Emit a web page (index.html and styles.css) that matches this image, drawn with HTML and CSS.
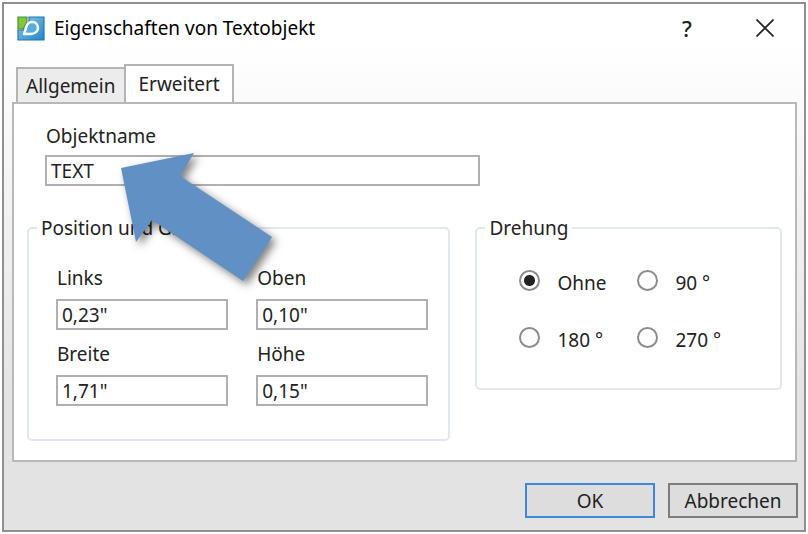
FILE: index.html
```html
<!DOCTYPE html>
<html lang="de">

<head>
    <meta charset="UTF-8">
    <title>Eigenschaften von Textobjekt</title>
    <link rel="stylesheet" href="styles.css">
</head>

<body>
    <form class="dialog">
        <header class="titlebar">
            <svg class="logo" viewBox="0 0 28 25" aria-hidden="true">
                <defs>
                    <linearGradient id="blau" x1="0" y1="0" x2="1" y2="1">
                        <stop offset="0" stop-color="#8ccdea" />
                        <stop offset="1" stop-color="#2384c6" />
                    </linearGradient>
                </defs>
                <path d="M1 14H6L12 9V1H27V24H1Z" fill="url(#blau)" stroke="#2574b5" stroke-width="1.2" />
                <path d="M1 1H10V6L6 13H1Z" fill="#83c441" stroke="#4c8f2b" stroke-width="1.2" />
                <path d="M7 18L10 9C11 7 13 6 15 6C19 6 21 9 21 12C21 16 17 18 13 18Z" fill="#55aee0" stroke="#fff" stroke-width="2.4" stroke-linejoin="round" />
            </svg>
            <h1>Eigenschaften von Textobjekt</h1>
            <button type="button" class="icon-button help" aria-label="Hilfe">?</button>
            <button type="button" class="icon-button" aria-label="Schließen">
                <svg class="close" viewBox="0 0 18 18" aria-hidden="true">
                    <path d="M0.5 0.5L17.5 17.5M17.5 0.5L0.5 17.5" stroke="#222" stroke-width="1.7" fill="none" />
                </svg>
            </button>
        </header>

        <nav class="tabs" role="tablist">
            <button type="button" class="tab" role="tab">Allgemein</button>
            <button type="button" class="tab valgt" role="tab" aria-selected="true">Erweitert</button>
        </nav>

        <section class="panel">
            <div class="field object-name">
                <label for="objektname">Objektname</label>
                <input type="text" id="objektname" value="TEXT">
            </div>

            <div class="groups">
                <fieldset>
                    <legend>Position und Größe</legend>
                    <div class="sizes">
                        <div class="field">
                            <label for="links">Links</label>
                            <input type="text" id="links" value="0,23&quot;">
                        </div>
                        <div class="field">
                            <label for="oben">Oben</label>
                            <input type="text" id="oben" value="0,10&quot;">
                        </div>
                        <div class="field">
                            <label for="breite">Breite</label>
                            <input type="text" id="breite" value="1,71&quot;">
                        </div>
                        <div class="field">
                            <label for="hoehe">Höhe</label>
                            <input type="text" id="hoehe" value="0,15&quot;">
                        </div>
                    </div>
                </fieldset>

                <fieldset>
                    <legend>Drehung</legend>
                    <div class="angles">
                        <label><input type="radio" name="drehung" checked><span>Ohne</span></label>
                        <label><input type="radio" name="drehung"><span>90 °</span></label>
                        <label><input type="radio" name="drehung"><span>180 °</span></label>
                        <label><input type="radio" name="drehung"><span>270 °</span></label>
                    </div>
                </fieldset>
            </div>

            <!-- arrow that points at the object name -->
            <svg class="arrow" viewBox="0 0 151 128" aria-hidden="true">
                <path d="M0 15L73 0L59 23L151 84L122 128L31 67L15 89Z" fill="#6090c4" />
            </svg>
        </section>

        <footer class="actions">
            <button type="submit" class="action primary">OK</button>
            <button type="button" class="action">Abbrechen</button>
        </footer>
    </form>
</body>

</html>
```
FILE: styles.css
```css
* {
    box-sizing: border-box;
    margin: 0;
    padding: 0;
}

body {
    padding: 2px;
    background: #fff;
}

body,
button,
input {
    font-family: "Noto Sans", "Open Sans", sans-serif;
    font-size: 19px;
    line-height: 24px;
    color: #222;
}

.dialog {
    min-height: calc(100vh - 4px);
    padding: 0 7px 12px 8px;
    border: 2px solid #909090;
    background: linear-gradient(#fff 40px, #e3e3e3 400px);
}

/* title bar */
.titlebar {
    display: flex;
    align-items: center;
    height: 48px;
    padding: 0 17px 0 5px;
}

.logo {
    width: 28px;
    height: 25px;
    margin-right: 9px;
}

h1 {
    flex: 1;
    font-size: 19px;
    font-weight: normal;
    color: #000;
}

.icon-button {
    display: flex;
    align-items: center;
    justify-content: center;
    width: 30px;
    height: 30px;
    margin-left: 48px;
    border: none;
    background: none;
}

.help {
    font-size: 22px;
    font-weight: 500;
}

.close {
    width: 18px;
    height: 18px;
}

/* tabs */
.tabs {
    display: flex;
    align-items: flex-end;
    height: 50px;
    padding: 0 4px;
}

.tab {
    height: 35px;
    padding: 0 9px 0 8px;
    border: 2px solid #b4b4b4;
    border-width: 2px 0 0 2px;
    background: #ececec;
}

.tab.valgt {
    position: relative;
    height: 40px;
    margin-bottom: -2px;
    padding: 0 12px 2px;
    border-width: 2px 2px 0;
    background: #fff;
}

.panel {
    position: relative;
    padding: 20px 13px 19px;
    border: 2px solid #b8b8b8;
    background: #fff;
}

.field {
    display: flex;
    flex-direction: column;
    gap: 7px;
}

.field label {
    padding-left: 1px;
}

.field input {
    width: 100%;
    height: 31px;
    padding: 0 4px;
    border: 2px solid #b0b0b4;
    background: #fff;
}

.object-name {
    width: 60%;
    padding-left: 18px;
}

/* groups */
.groups {
    display: grid;
    grid-template-columns: 424fr 307fr;
    align-items: start;
    gap: 25px;
    margin-top: 30px;
}

fieldset {
    min-width: 0;
    border: 2px solid #e3e8ee;
    border-radius: 5px;
}

legend {
    margin-left: 8px;
    padding: 0 4px;
}

.sizes {
    display: grid;
    grid-template-columns: 1fr 1fr;
    gap: 12px 28px;
    padding: 26px 20px 33px 27px;
}

.sizes .field {
    gap: 9px;
}

.angles {
    display: grid;
    grid-template-columns: 118px 1fr;
    gap: 33px 0;
    padding: 30px 20px 37px 42px;
}

.angles label {
    display: flex;
    align-items: flex-start;
    gap: 17px;
}

.angles input {
    appearance: none;
    flex: none;
    width: 21px;
    height: 21px;
    border: 2px solid #8c8c8c;
    border-radius: 50%;
    background: #fff;
}

.angles input:checked {
    background: radial-gradient(circle, #222 5px, #fff 6px);
}

.angles span {
    padding-top: 2px;
    line-height: 22px;
}

.arrow {
    position: absolute;
    top: 49px;
    left: 107px;
    width: 151px;
    height: 128px;
    overflow: visible;
    filter: drop-shadow(4px 4px 4px rgba(0, 0, 0, 0.5));
}

/* bottom buttons */
.actions {
    display: flex;
    justify-content: flex-end;
    gap: 13px;
    margin-top: 21px;
    margin-right: -1px;
}

.action {
    width: 130px;
    height: 35px;
    border: 2px solid #7d7d7d;
    background: #dddddd;
}

.action.primary {
    border-color: #3f88d8;
}
```
